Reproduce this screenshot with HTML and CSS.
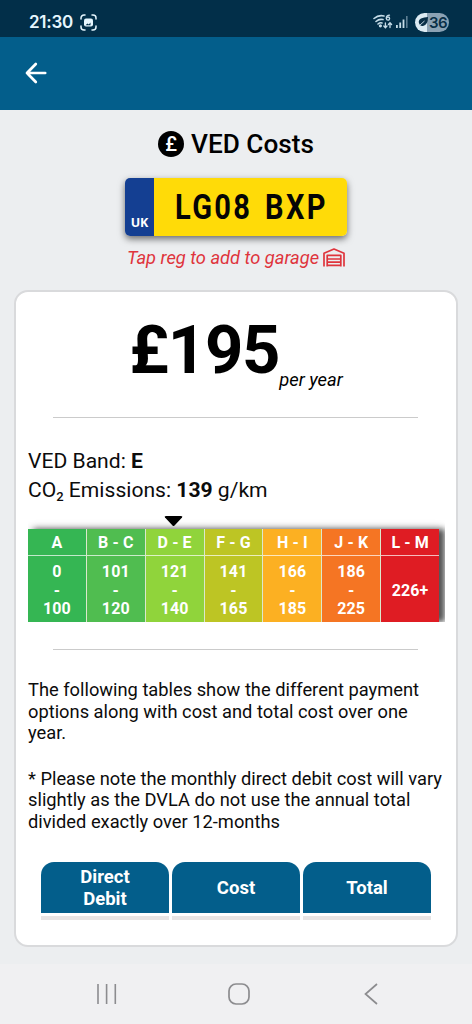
FILE: index.html
```html
<!DOCTYPE html>
<html lang="en">
<head>
<meta charset="utf-8">
<title>VED Costs</title>
<link rel="stylesheet" href="styles.css">
</head>
<body>
<div class="status">
  <span class="clock">21:30</span>
  <svg class="capture" width="17" height="17" viewBox="0 0 17 17" fill="none" stroke="#e6f7ff" stroke-width="1.5" stroke-linecap="round"><path d="M1 5V4a3 3 0 0 1 3-3h1M12 1h1a3 3 0 0 1 3 3v1M16 12v1a3 3 0 0 1-3 3h-1M5 16H4a3 3 0 0 1-3-3v-1"/><rect x="4" y="4.5" width="9" height="8" rx="2" fill="#e6f7ff" stroke="none"/><path d="M5.5 11.2L7.5 9.4l1.3 1 1.7-2v2.8z" fill="#022f49" stroke="none"/></svg>
  <span class="grow"></span>
  <svg class="wifi" width="20" height="16" viewBox="0 0 20 16" fill="none" stroke="#c5dce8" stroke-width="1.6" stroke-linecap="round"><path d="M1 4.5Q5.5.6 11 2M3 7.5Q6.2 4.6 10 5.6M5 10Q7 8.3 9 9"/><circle cx="7.4" cy="11.8" r=".8" fill="#c5dce8"/><path d="M16.5 1.2Q13.3 1.2 13.3 4.2" stroke-width="1.3"/><circle cx="15" cy="4.6" r="1.6" stroke-width="1.3"/><path d="M12.4 9v4.5M10.8 12l1.6 1.7 1.6-1.7M17 13.5V9M15.4 10.5L17 8.8l1.6 1.7" stroke-width="1.3"/></svg>
  <svg class="signal" width="12" height="13" viewBox="0 0 12 13"><g fill="#c5dce8"><rect x="0" y="9" width="1.8" height="3"/><rect x="3.3" y="6.5" width="1.8" height="5.5"/><rect x="6.6" y="3.5" width="1.8" height="8.5"/></g><rect x="10" y="0" width="1.6" height="12" fill="#5d7f93"/></svg>
  <span class="battery"><svg width="12" height="12" viewBox="0 0 12 12"><path d="M1 11L3 9Q0 5 4 2.5Q7 1 11 1Q11 9 6 10Q4 10.3 3 9z" fill="#092f47"/><path d="M3 9L7.5 5" stroke="#c4d5e1"/></svg>36</span>
</div>
<header class="bar">
  <svg width="22" height="22" viewBox="0 0 22 22" fill="none" stroke="#fff" stroke-width="2.7" stroke-linecap="round" stroke-linejoin="round"><path d="M20.2 11H2M10.8 2L2 11l8.8 9"/></svg>
</header>
<main class="page">
  <h1 class="title"><span class="coin">£</span><span>VED Costs</span></h1>
  <div class="plate"><span class="country">UK</span><div class="regbox"><span class="reg">LG08 BXP</span></div></div>
  <p class="hint"><span>Tap reg to add to garage</span>
    <svg width="22" height="19" viewBox="0 0 22 19" fill="none" stroke="#df343c" stroke-width="1.7" stroke-linejoin="round"><path d="M1 18.5V5.2L11 1l10 4.2v13.3M4.2 18.5V7.4h13.6v11.1M4.2 11h13.6M4.2 14.2h13.6M4.2 17.4h13.6"/></svg>
  </p>
  <section class="card">
    <div class="price"><span class="amount">£195</span><span class="period">per year</span></div>
    <hr class="rule">
    <div class="facts">
      <p>VED Band: <b>E</b></p>
      <p>CO<span class="sub">2</span> Emissions: <b>139</b> g/km</p>
    </div>
    <svg class="marker" width="19" height="12" viewBox="0 0 19 12"><path d="M2 1h15q2 0 1 1.5L10.5 10.5q-1 1-2 0L1 2.5Q0 1 2 1z" fill="#000"/></svg>
    <div class="bands">
      <div class="band b1"><span>A</span><div><p>0<br>-<br>100</p></div></div>
      <div class="band b2"><span>B - C</span><div><p>101<br>-<br>120</p></div></div>
      <div class="band b3"><span>D - E</span><div><p>121<br>-<br>140</p></div></div>
      <div class="band b4"><span>F - G</span><div><p>141<br>-<br>165</p></div></div>
      <div class="band b5"><span>H - I</span><div><p>166<br>-<br>185</p></div></div>
      <div class="band b6"><span>J - K</span><div><p>186<br>-<br>225</p></div></div>
      <div class="band b7"><span>L - M</span><div><p>226+</p></div></div>
    </div>
    <hr class="rule">
    <div class="notes">
      <p>The following tables show the different payment<br>options along with cost and total cost over one<br>year.</p>
      <p>* Please note the monthly direct debit cost will vary<br>slightly as the DVLA do not use the annual total<br>divided exactly over 12-months</p>
    </div>
    <div class="cols">
      <div class="col"><span>Direct<br>Debit</span></div>
      <div class="col"><span>Cost</span></div>
      <div class="col"><span>Total</span></div>
    </div>
  </section>
</main>
<nav class="nav">
  <svg width="22" height="22" viewBox="0 0 22 22" stroke="#8c8c8f" stroke-width="1.6"><path d="M2 1v20M10.6 1v20M19.3 1v20"/></svg>
  <svg class="home" width="22" height="22" viewBox="0 0 22 22" fill="none" stroke="#8c8c8f" stroke-width="1.7"><rect x="1" y="1" width="20" height="20" rx="7"/></svg>
  <svg width="14" height="22" viewBox="0 0 14 22" fill="none" stroke="#8c8c8f" stroke-width="1.7"><path d="M13 1L1.5 11 13 21"/></svg>
</nav>
</body>
</html>
```
FILE: styles.css
```css
* { box-sizing: border-box; }
body { margin: 0; width: 472px; height: 1024px; display: flex; flex-direction: column; overflow: hidden; background: #eceef0; color: #0c0c0c; font-family: Roboto, "Liberation Sans", sans-serif; }
p, h1, hr { margin: 0; }
.status { height: 37px; flex: none; display: flex; align-items: center; padding: 7px 23px 0 29px; background: #022f49; color: #e6f7ff; }
.clock { font: 600 17px/20px Inter, Roboto, sans-serif; letter-spacing: -.25px; }
.capture { margin-left: 7px; }
.grow { flex: 1; }
.wifi { margin-right: 3px; }
.signal { margin-right: 7px; }
.battery { width: 34px; height: 19px; border-radius: 10px; display: flex; align-items: center; justify-content: center; background: linear-gradient(90deg, #dcebf3 36%, #8ba2b4 36%); color: #092f47; font: 600 15px/19px Inter, Roboto, sans-serif; letter-spacing: -.6px; }
.battery svg { flex: none; }
.bar { height: 73px; flex: none; padding: 25px 0 0 25px; background: #035e8b; }
.page { height: 854px; flex: none; display: flex; flex-direction: column; align-items: center; padding-top: 19px; }
.title { height: 30px; display: flex; align-items: center; gap: 7px; font-size: 26.2px; line-height: 30px; font-weight: 500; color: #000; }
.coin { width: 26px; height: 26px; border-radius: 50%; background: #000; color: #fff; font-size: 20px; line-height: 26px; font-weight: 500; text-align: center; }
.plate { width: 222px; height: 58px; margin-top: 19px; display: flex; border-radius: 5px; overflow: hidden; box-shadow: 0 3px 7px rgba(0,0,0,.55); }
.country { width: 29px; flex: none; background: #143f92; color: #fff; font: 700 12.5px/16px "Open Sans", Roboto, sans-serif; padding-top: 37px; text-align: center; }
.regbox { flex: 1; min-width: 0; background: #ffdb08; padding-left: 21px; }
.reg { display: inline-block; white-space: nowrap; font-size: 35px; line-height: 59px; font-weight: 700; color: #050505; letter-spacing: 2.8px; word-spacing: 4px; transform: scaleX(.83); transform-origin: left; }
.hint { display: flex; align-items: center; gap: 4px; height: 24px; margin-top: 9px; font-size: 18.3px; font-style: italic; color: #df343c; white-space: nowrap; }
.card { width: 444px; height: 657px; flex: none; margin-top: 21px; border: 2px solid #d9dadc; border-radius: 14px; background: #fff; padding: 0 12px; display: flex; flex-direction: column; }
.price { height: 125px; display: flex; justify-content: center; color: #000; }
.amount { font-size: 67px; line-height: 78px; font-weight: 700; margin-top: 19px; letter-spacing: -1.3px; }
.period { font-size: 18.4px; line-height: 20px; font-style: italic; margin-top: 78px; }
.rule { border: 0; height: 1px; flex: none; width: 365px; margin-left: 25px; background: #cbcbcb; }
.facts { margin-top: 28px; height: 58px; flex: none; font-size: 21.1px; line-height: 29px; white-space: nowrap; }
.sub { font-size: 13px; line-height: 0; font-weight: 500; position: relative; top: 4px; }
.marker { margin: 11px 0 0 136px; flex: none; }
.bands { display: flex; gap: 1px; height: 93px; width: 411px; flex: none; margin-top: 2px; background: #dbe8cd; box-shadow: 6px 0 6px rgba(0,0,0,.65), 2px -2px 8px rgba(0,0,0,.12); clip-path: inset(-12px -6px 0 0); }
.band { flex: 1 1 0; min-width: 0; display: flex; flex-direction: column; color: #fff; font-size: 16px; font-weight: 700; text-align: center; letter-spacing: .1px; }
.band span { height: 27px; line-height: 28px; border-bottom: 1px solid rgba(255,255,255,.7); }
.band div { flex: 1; display: flex; align-items: center; justify-content: center; line-height: 18.5px; padding-top: 4px; }
.b1 { background: #35b653; }
.b2 { background: #50bd50; }
.b3 { background: #90d43b; }
.b4 { background: #bdc524; }
.b5 { background: #fcb022; }
.b6 { background: #f57523; }
.b7 { background: #df1c23; }
.bands + .rule { margin-top: 27px; }
.notes { margin-top: 29px; height: 155px; flex: none; display: flex; flex-direction: column; gap: 24px; font-size: 18.3px; line-height: 21.6px; white-space: nowrap; }
.cols { display: flex; gap: 3px; margin: 28px 0 0 13px; width: 390px; }
.col { flex: 1; height: 58px; border-bottom: 4px solid #e7e4e4; }
.col span { display: flex; align-items: center; justify-content: center; height: 51px; padding-top: 2px; background: #035e8b; color: #fff; border-radius: 13px 13px 0 0; font-size: 18.5px; line-height: 21.5px; font-weight: 700; text-align: center; }
.nav { height: 60px; flex: none; display: flex; justify-content: space-between; align-items: center; padding: 0 94px 0 96px; background: #f0f0f2; }
.home { margin-right: 5px; }
```
